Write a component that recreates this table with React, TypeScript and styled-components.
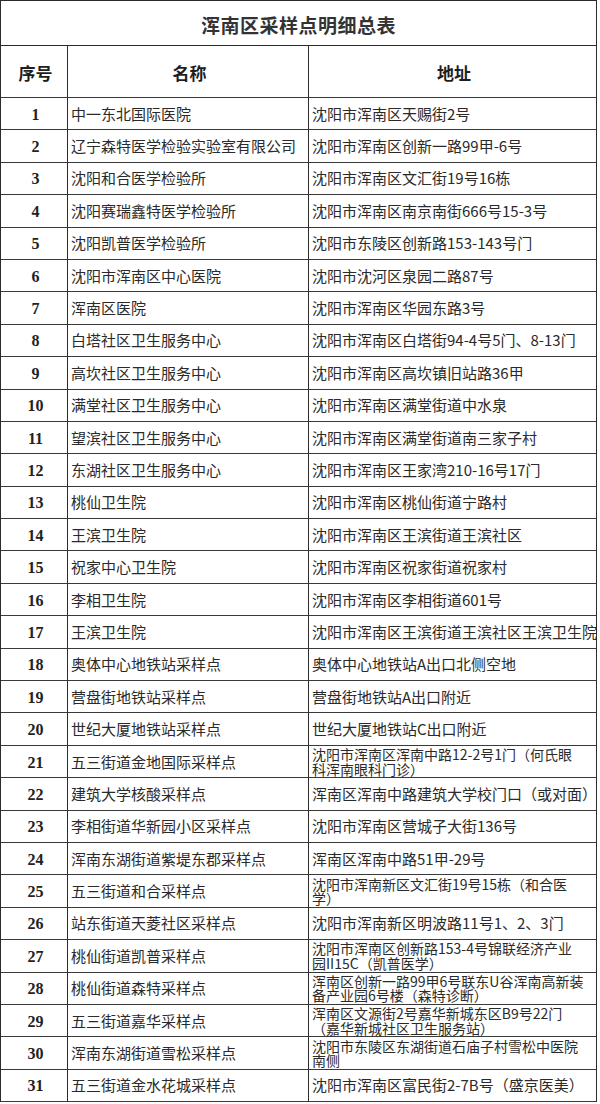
import React from 'react';
import styled, { createGlobalStyle } from 'styled-components';

const GlobalStyle = createGlobalStyle`
  html, body {
    margin: 0;
    padding: 0;
    background: #ffffff;
  }
  body {
    font-family: "Noto Sans CJK SC", "Noto Sans", sans-serif;
    color: #222;
  }
`;

const Sheet = styled.div`
  width: 597px;
  box-sizing: border-box;
  border-left: 1px solid #2b2b2b;
  border-top: 1px solid #2b2b2b;
  background: #fff;
`;

const TitleRow = styled.div`
  height: 45px;
  box-sizing: border-box;
  border-right: 1px solid #2b2b2b;
  border-bottom: 1px solid #2b2b2b;
  display: flex;
  align-items: center;
  justify-content: center;
  padding-top: 3px;
  font-family: "Noto Sans CJK SC", sans-serif;
  font-weight: 700;
  font-size: 19px;
  letter-spacing: 0.5px;
  color: #333;
`;

const Row = styled.div<{ $h: number }>`
  display: grid;
  grid-template-columns: 67px 241px 288px;
  height: ${(p) => p.$h}px;
`;

const Cell = styled.div<{ $center?: boolean }>`
  box-sizing: border-box;
  border-right: 1px solid #2b2b2b;
  border-bottom: 1px solid #3a3a3a;
  display: flex;
  align-items: center;
  justify-content: ${(p) => (p.$center ? 'center' : 'flex-start')};
  padding: 0 0 0 3px;
  min-width: 0;
`;

const HeadText = styled.span`
  font-family: "Noto Sans CJK SC", sans-serif;
  font-weight: 700;
  font-size: 17px;
  color: #1e1e1e;
  padding-top: 2px;
`;

const Num = styled.span`
  font-family: "Liberation Serif", "Times New Roman", serif;
  font-weight: 700;
  font-size: 16px;
  color: #222;
  padding-top: 2px;
`;

const Text = styled.span<{ $tight?: boolean }>`
  font-family: "Noto Sans CJK SC", sans-serif;
  font-weight: 400;
  font-size: ${(p) => (p.$tight ? '14px' : '15px')};
  line-height: ${(p) => (p.$tight ? '14.5px' : '20px')};
  color: #2a2a2a;
  white-space: pre;
`;

type Site = { name: string; addr: string };

const sites: Site[] = [
  { name: '中一东北国际医院', addr: '沈阳市浑南区天赐街2号' },
  { name: '辽宁森特医学检验实验室有限公司', addr: '沈阳市浑南区创新一路99甲-6号' },
  { name: '沈阳和合医学检验所', addr: '沈阳市浑南区文汇街19号16栋' },
  { name: '沈阳赛瑞鑫特医学检验所', addr: '沈阳市浑南区南京南街666号15-3号' },
  { name: '沈阳凯普医学检验所', addr: '沈阳市东陵区创新路153-143号门' },
  { name: '沈阳市浑南区中心医院', addr: '沈阳市沈河区泉园二路87号' },
  { name: '浑南区医院', addr: '沈阳市浑南区华园东路3号' },
  { name: '白塔社区卫生服务中心', addr: '沈阳市浑南区白塔街94-4号5门、8-13门' },
  { name: '高坎社区卫生服务中心', addr: '沈阳市浑南区高坎镇旧站路36甲' },
  { name: '满堂社区卫生服务中心', addr: '沈阳市浑南区满堂街道中水泉' },
  { name: '望滨社区卫生服务中心', addr: '沈阳市浑南区满堂街道南三家子村' },
  { name: '东湖社区卫生服务中心', addr: '沈阳市浑南区王家湾210-16号17门' },
  { name: '桃仙卫生院', addr: '沈阳市浑南区桃仙街道宁路村' },
  { name: '王滨卫生院', addr: '沈阳市浑南区王滨街道王滨社区' },
  { name: '祝家中心卫生院', addr: '沈阳市浑南区祝家街道祝家村' },
  { name: '李相卫生院', addr: '沈阳市浑南区李相街道601号' },
  { name: '王滨卫生院', addr: '沈阳市浑南区王滨街道王滨社区王滨卫生院' },
  { name: '奥体中心地铁站采样点', addr: '奥体中心地铁站A出口北侧空地' },
  { name: '营盘街地铁站采样点', addr: '营盘街地铁站A出口附近' },
  { name: '世纪大厦地铁站采样点', addr: '世纪大厦地铁站C出口附近' },
  { name: '五三街道金地国际采样点', addr: '沈阳市浑南区浑南中路12-2号1门（何氏眼\n科浑南眼科门诊）' },
  { name: '建筑大学核酸采样点', addr: '浑南区浑南中路建筑大学校门口（或对面）' },
  { name: '李相街道华新园小区采样点', addr: '沈阳市浑南区营城子大街136号' },
  { name: '浑南东湖街道紫堤东郡采样点', addr: '浑南区浑南中路51甲-29号' },
  { name: '五三街道和合采样点', addr: '沈阳市浑南新区文汇街19号15栋（和合医\n学）' },
  { name: '站东街道天菱社区采样点', addr: '沈阳市浑南新区明波路11号1、2、3门' },
  { name: '桃仙街道凯普采样点', addr: '沈阳市浑南区创新路153-4号锦联经济产业\n园II15C（凯普医学）' },
  { name: '桃仙街道森特采样点', addr: '浑南区创新一路99甲6号联东U谷浑南高新装\n备产业园6号楼（森特诊断）' },
  { name: '五三街道嘉华采样点', addr: '浑南区文源街2号嘉华新城东区B9号22门\n（嘉华新城社区卫生服务站）' },
  { name: '浑南东湖街道雪松采样点', addr: '沈阳市东陵区东湖街道石庙子村雪松中医院\n南侧' },
  { name: '五三街道金水花城采样点', addr: '沈阳市浑南区富民街2-7B号（盛京医美）' },
];

const App: React.FC = () => {
  return (
    <>
      <GlobalStyle />
      <Sheet>
        <TitleRow>浑南区采样点明细总表</TitleRow>
        <Row $h={52}>
          <Cell $center>
            <HeadText>序号</HeadText>
          </Cell>
          <Cell $center>
            <HeadText>名称</HeadText>
          </Cell>
          <Cell $center>
            <HeadText>地址</HeadText>
          </Cell>
        </Row>
        {sites.map((s, i) => {
          const wrapped = s.addr.includes('\n');
          return (
            <Row key={i} $h={32.4}>
              <Cell $center>
                <Num>{i + 1}</Num>
              </Cell>
              <Cell>
                <Text>{s.name}</Text>
              </Cell>
              <Cell>
                <Text $tight={wrapped}>{s.addr}</Text>
              </Cell>
            </Row>
          );
        })}
      </Sheet>
    </>
  );
};

export default App;
